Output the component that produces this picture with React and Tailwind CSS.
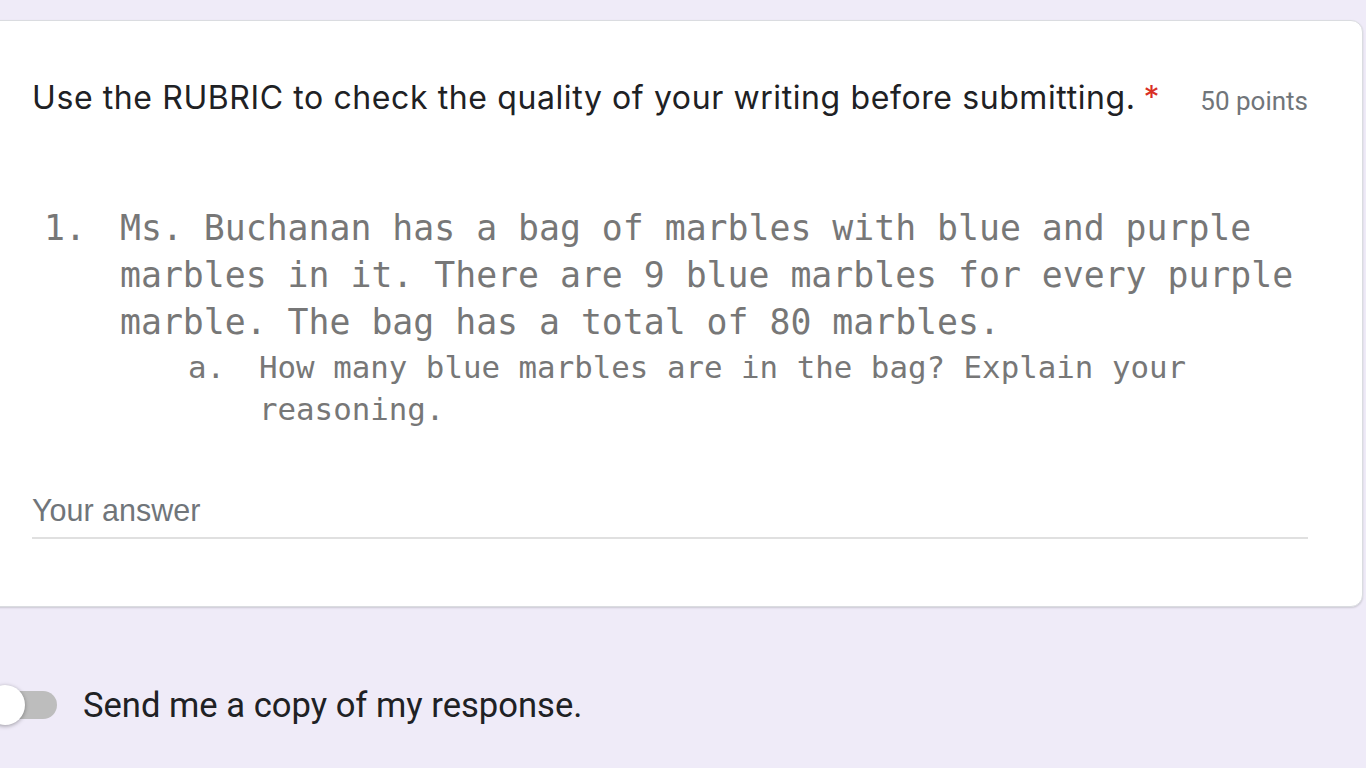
export default function App() {
  const mono = { fontFamily: '"DejaVu Sans Mono", monospace' };
  return (
    <div className="h-[768px] w-[1366px] overflow-hidden bg-[#efebf8]">
      <div className="pt-[20px]">
        <div className="ml-[-24px] mr-[3px] rounded-[12px] border border-[#dadce0] bg-white pl-[55px] pr-[54px] pt-[57px] pb-[67px] shadow-[0_1px_2px_rgba(0,0,0,0.15)]">
          <div className="flex items-start justify-between">
            <div className="text-[32px] leading-[40px] tracking-[0.6px] text-[#202124]" style={{ fontFamily: 'Inter, sans-serif' }}>
              Use the RUBRIC to check the quality of your writing before submitting.
              <span className="ml-[8px] text-[#d93025]">*</span>
            </div>
            <div className="mt-[3px] text-[26px] leading-[40px] text-[#70757a]" style={{ fontFamily: 'Roboto, sans-serif' }}>
              50 points
            </div>
          </div>

          <div className="mt-[84px] text-[#777777]" style={mono}>
            <div className="flex text-[34.8px] leading-[47px]">
              <div className="ml-[12px] w-[76px] shrink-0">1.</div>
              <div>
                <div className="whitespace-nowrap">Ms. Buchanan has a bag of marbles with blue and purple</div>
                <div className="whitespace-nowrap">marbles in it. There are 9 blue marbles for every purple</div>
                <div className="whitespace-nowrap">marble. The bag has a total of 80 marbles.</div>
              </div>
            </div>
            <div className="flex text-[30.8px] leading-[42px]">
              <div className="ml-[156px] w-[71px] shrink-0">a.</div>
              <div>
                <div className="whitespace-nowrap">How many blue marbles are in the bag? Explain your</div>
                <div className="whitespace-nowrap">reasoning.</div>
              </div>
            </div>
          </div>

          <div className="mt-[62px] border-b-2 border-[#e0e0e0] pb-[9px]">
            <div className="text-[30.5px] leading-[36px] text-[#70757a]" style={{ fontFamily: '"Liberation Sans", Arial, sans-serif' }}>
              Your answer
            </div>
          </div>
        </div>

        <div className="mt-[78px] flex items-center">
          <div className="relative ml-[-10px] h-[28px] w-[67px]">
            <div className="absolute inset-0 rounded-full bg-[#bdbdbd]"></div>
            <div className="absolute left-[-5px] top-[-6px] h-[40px] w-[40px] rounded-full bg-white shadow-[0_1px_4px_rgba(0,0,0,0.35)]"></div>
          </div>
          <div className="ml-[26px] text-[34.6px] leading-[40px] text-[#202124]" style={{ fontFamily: 'Roboto, sans-serif' }}>
            Send me a copy of my response.
          </div>
        </div>
      </div>
    </div>
  );
}
